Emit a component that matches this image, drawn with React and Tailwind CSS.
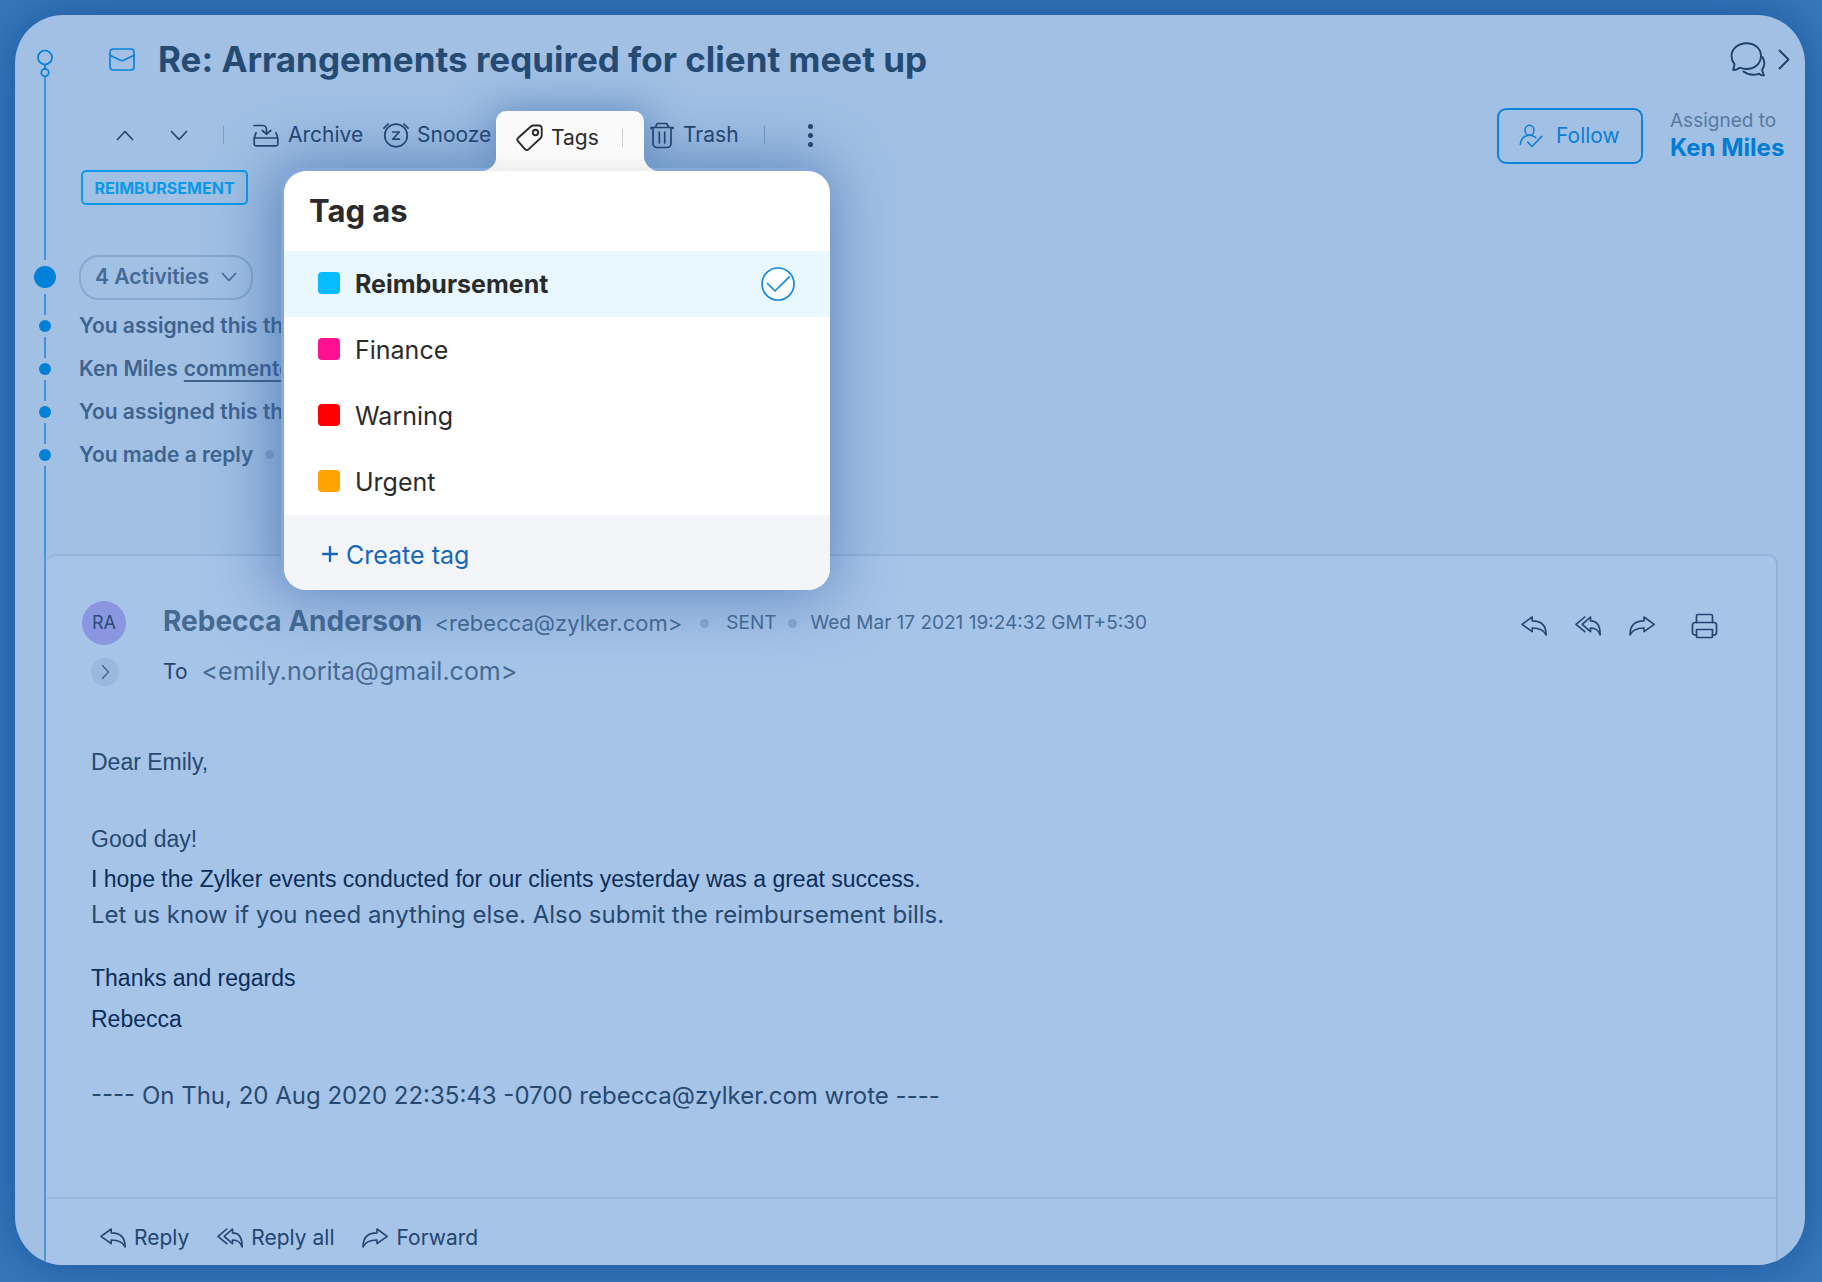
const tags = [
  { name: "Reimbursement", color: "bg-[#06bcff]", active: true },
  { name: "Finance", color: "bg-[#ff0f92]" },
  { name: "Warning", color: "bg-[#ff0000]" },
  { name: "Urgent", color: "bg-[#ffa300]" },
]

const activities = [
  { text: "You assigned this thread" },
  { text: "Ken Miles", link: "commented" },
  { text: "You assigned this thread" },
  { text: "You made a reply", dot: true },
]

function Icon({ w, h, sw = 1.7, className = "", children }) {
  return (
    <svg
      width={w}
      height={h}
      viewBox={`0 0 ${w} ${h}`}
      fill="none"
      stroke="currentColor"
      strokeWidth={sw}
      strokeLinecap="round"
      strokeLinejoin="round"
      aria-hidden="true"
      className={`shrink-0 ${className}`}
    >
      {children}
    </svg>
  )
}

const ReplyIcon = () => (
  <Icon w={26} h={20} sw={1.6}>
    <path d="M1 8.3 11.2 1v3.9C20 4.9 25.2 9 25.2 19 23 13.5 18.5 12 11.2 12v3.7Z" />
  </Icon>
)

const ReplyAllIcon = () => (
  <Icon w={26} h={20} sw={1.6}>
    <path d="M9.8 1 1 8.3l8.8 7.4" />
    <path d="M7.2 8.3 15.5 1v3.9C21.5 4.9 25.2 9 25.2 19 23.5 13.5 20.5 12 15.5 12v3.7Z" />
  </Icon>
)

const ForwardIcon = () => (
  <Icon w={26} h={20} sw={1.6}>
    <path d="M25.2 8.3 15 1v3.9C6.2 4.9 1 9 1 19 3.2 13.5 7.7 12 15 12v3.7Z" />
  </Icon>
)

const PrintIcon = () => (
  <Icon w={27} h={26}>
    <path d="M5.5 9.5V3A1.5 1.5 0 0 1 7 1.5h13A1.5 1.5 0 0 1 21.5 3v6.5" />
    <path d="M5.5 22H4a2.5 2.5 0 0 1-2.5-2.5V12A2.5 2.5 0 0 1 4 9.5h19a2.5 2.5 0 0 1 2.500 2.500v7.500A2.500 2.500 0 0 1 23 22h-1.500" />
    <path d="M5.500 16.500h16v7a1 1 0 0 1-1 1h-14a1 1 0 0 1-1-1Z" />
  </Icon>
)

const ArchiveIcon = () => (
  <Icon w={26} h={23}>
    <path d="M1 1.500h8.500a4 4 0 0 1 4 4V10" />
    <path d="m9.300 6.500 4.200 3.700L17.800 6.500" />
    <path d="M3 8.800 1.200 14v6a1.800 1.800 0 0 0 1.800 1.800h20a1.800 1.800 0 0 0 1.800-1.800v-6L23 8.800M1.200 14h23.600" />
  </Icon>
)

const SnoozeIcon = () => (
  <Icon w={26} h={26}>
    <circle cx="13" cy="13.500" r="11.300" />
    <path d="M1 6.200 5.200 2M20.800 2 25 6.200" />
    <path d="M9.700 10h6.600l-6.600 7.200h6.600" />
  </Icon>
)

const TagIcon = () => (
  <Icon w={27} h={27} sw={1.900}>
    <path d="M23 1.500h-5.500a4 4 0 0 0-2.700 1L2.300 13.700a2.500 2.500 0 0 0-.3 3.500l6.900 8a2.500 2.500 0 0 0 3.600.2L24.700 14a3.500 3.500 0 0 0 1-2.500V4A2.600 2.600 0 0 0 23 1.500Z" />
    <circle cx="19.500" cy="8.500" r="2.700" />
  </Icon>
)

const TrashIcon = () => (
  <Icon w={24} h={27}>
    <path d="M1 6.500V5.500h22v1M5.200 5.300 7.300 1.500h9.400l2.100 3.800" />
    <path d="M3 5.500v16a4 4 0 0 0 4 4h10a4 4 0 0 0 4-4v-16" />
    <path d="M9.300 10v11M14.700 10v11" />
  </Icon>
)

const ChatIcon = () => (
  <Icon w={36} h={35} sw={1.900}>
    <path d="M16.500 1.200C8 1.200 1.500 7 1.500 14c0 3.300 1.200 6 3 8.200L3.200 28c3 .2 5-.8 6.500-2.300 2 .8 4.300 1.300 6.800 1.300C25 27 31 21.200 31 14S25 1.200 16.500 1.200Z" />
    <path d="M32.500 15c2.300 4 2.500 9-.5 13l1.800 5.300c-2 .2-3.700-.3-5-1.500-5.500 1.700-11 .9-15.300-2.300" />
  </Icon>
)

const FollowIcon = () => (
  <Icon w={24} h={24} sw={1.500}>
    <ellipse cx="10.500" cy="6.200" rx="4.500" ry="5" />
    <path d="M1.200 20.500c.3-6 4.500-9.200 9.300-9.200 2.500 0 4.500.8 6.300 2.200" />
    <path d="m8.700 18 4.300 4.500 9.800-10.200" />
  </Icon>
)

const ChevronDown = ({ w = 18, h = 11, sw }) => (
  <Icon w={w} h={h} sw={sw}>
    <path d={`M1.500 1.500 ${w / 2} ${h - 1.5} ${w - 1.5} 1.500`} />
  </Icon>
)

function Divider({ className = "" }) {
  return <span className={`h-[18px] w-px shrink-0 ${className}`} />
}

function TagMenu() {
  return (
    <div className="absolute top-[60px] -left-[212px] z-10 w-[546px]">
      <div className="absolute -top-[3px] -left-[3px] right-[8px] bottom-[8px] rounded-md bg-[#86a8d8] shadow-[0_4px_64px_8px_rgba(42,92,158,0.6)]" />
      <div className="relative overflow-hidden rounded-[22px] bg-white text-[25px] text-[#2b2b2b]">
        <h2 className="flex h-20 items-center px-[25px] text-[31px] font-bold">Tag as</h2>
        <ul>
          {tags.map((tag) => (
            <li key={tag.name}>
              <button
                type="button"
                className={`flex h-[66px] w-full items-center gap-[15px] pr-[35px] pl-[34px] text-left ${tag.active ? "bg-[#e9f7ff] font-bold" : ""}`}
              >
                <span className={`mb-[2px] size-[22px] rounded-[4px] ${tag.color}`} />
                <span className="flex-1 pt-[2px]">{tag.name}</span>
                {tag.active && (
                  <Icon w={34} h={34} className="text-[#0f8ae0]">
                    <circle cx="17" cy="17" r="16" fill="white" />
                    <path d="m6.500 16.500 7.500 7.500L28.300 9.800" />
                  </Icon>
                )}
              </button>
            </li>
          ))}
        </ul>
        <button
          type="button"
          className="flex h-[75px] w-full items-center gap-2 bg-[#f3f5f8] pt-[6px] pl-[38px] text-[#1767b8]"
        >
          <Icon w={16} h={16} sw={2.400} className="mb-1">
            <path d="M8 1v14M1 8h14" />
          </Icon>
          Create tag
        </button>
      </div>
    </div>
  )
}

function Toolbar() {
  return (
    <div className="mt-[3px] flex h-[59px] items-start text-[21px] text-[#23456f]">
      <div className="flex h-12 items-center">
        <button type="button" aria-label="Previous" className="ml-[37px] rotate-180">
          <ChevronDown />
        </button>
        <button type="button" aria-label="Next" className="ml-9">
          <ChevronDown />
        </button>
        <Divider className="ml-[35px] bg-[#7d9fc8]" />
        <button type="button" className="ml-[29px] flex w-[130px] items-center gap-[9px]">
          <ArchiveIcon />
          Archive
        </button>
        <button type="button" className="flex w-[113px] items-center gap-2">
          <SnoozeIcon />
          Snooze
        </button>
      </div>

      {/* Open tab with the tag menu */}
      <div className="relative z-10">
        <div className="absolute inset-x-0 top-1 h-10 rounded-[10px] shadow-[0_0_44px_6px_rgba(42,92,158,0.5)]" />
        <svg
          width="172"
          height="60"
          viewBox="0 0 172 60"
          aria-hidden="true"
          className="absolute top-0 -left-3 z-20"
        >
          <defs>
            <linearGradient id="tab" x1="0" y1="0" x2="0" y2="1">
              <stop offset="0.75" stopColor="#fafafa" />
              <stop offset="1" stopColor="#efefef" />
            </linearGradient>
          </defs>
          <path d="M0 60c7-2 12-7 12-13V10A10 10 0 0 1 22 0h128a10 10 0 0 1 10 10v37c1 5 5 11 12 13Z" fill="url(#tab)" />
        </svg>
        <button type="button" aria-expanded="true" className="relative z-30 flex h-[53px] w-[148px] items-center gap-2 pl-5 text-[#2b2b2b]">
          <TagIcon />
          Tags
          <Divider className="ml-[15px] bg-[#cfcfcf]" />
        </button>
        <TagMenu />
      </div>

      <div className="relative z-20 flex h-12 items-center">
        <button type="button" className="ml-[6px] flex items-center gap-[9px]">
          <TrashIcon />
          Trash
        </button>
        <Divider className="ml-[25px] bg-[#6c90c0]" />
        <button type="button" aria-label="More actions" className="ml-[43px] flex flex-col gap-1">
          <span className="size-[5px] rounded-full bg-current" />
          <span className="size-[5px] rounded-full bg-current" />
          <span className="size-[5px] rounded-full bg-current" />
        </button>
      </div>
    </div>
  )
}

function Rail({ big }) {
  return (
    <div className="flex w-[60px] shrink-0 flex-col items-center self-stretch">
      <span className="w-[2px] flex-1 bg-[#3f93dc]" />
      <span className={`rounded-full bg-[#0080d6] ${big ? "my-[6px] size-[22px]" : "my-[5px] size-3"}`} />
      <span className="w-[2px] flex-1 bg-[#3f93dc]" />
    </div>
  )
}

function Message() {
  return (
    <article className="mr-[27px] ml-[29px] flex flex-1 border-l-2 border-[#4a97da]">
      <div className="flex flex-1 flex-col rounded-t-[10px] border-2 border-b-0 border-l-0 border-[#93b3da] bg-[#a6c3e8]">
        <header className="flex items-start pt-[45px] pr-[58px] pl-9">
          <div className="flex w-[81px] flex-col gap-[13px]">
            <span className="flex size-11 items-center justify-center rounded-full bg-[#8a97e0] text-lg text-[#2c4a7a]">
              RA
            </span>
            <button
              type="button"
              aria-label="Show details"
              className="ml-[9px] flex size-7 items-center justify-center rounded-full bg-[#9ab8de] text-[#456a92]"
            >
              <Icon w={9} h={16} sw={1.500}>
                <path d="m1.500 1.500 6 6.500-6 6.500" />
              </Icon>
            </button>
          </div>
          <div className="flex flex-1 flex-col text-[#456a92]">
            <div className="mt-[2px] flex h-9 items-center">
              <h2 className="text-[28px] font-bold">Rebecca Anderson</h2>
              <span className="ml-3 pt-1 text-[22px]">&lt;rebecca@zylker.com&gt;</span>
              <span className="mt-1 ml-[18px] size-[9px] rounded-full bg-[#88a9d0]" />
              <span className="ml-[17px] pt-1 text-[19px]">SENT</span>
              <span className="mt-1 ml-3 size-[9px] rounded-full bg-[#88a9d0]" />
              <span className="ml-[13px] pt-1 text-[19px]">Wed Mar 17 2021 19:24:32 GMT+5:30</span>
            </div>
            <p className="mt-[15px] flex h-9 items-center gap-[14px]">
              <span className="text-[21px] text-[#23456f]">To</span>
              <span className="text-[25px]">&lt;emily.norita@gmail.com&gt;</span>
            </p>
          </div>
          <div className="mt-3 flex items-center gap-7 text-[#23456f]">
            <button type="button" aria-label="Reply"><ReplyIcon /></button>
            <button type="button" aria-label="Reply all"><ReplyAllIcon /></button>
            <button type="button" aria-label="Forward"><ForwardIcon /></button>
            <button type="button" aria-label="Print" className="ml-2"><PrintIcon /></button>
          </div>
        </header>

        <div className="flex-1 px-[45px] pt-[54px] font-['Liberation_Sans',Arial,sans-serif] text-[23px] leading-9 text-[#26496f]">
          <p>Dear Emily,</p>
          <p className="mt-[41px]">Good day!</p>
          <p className="mt-1 text-[#0a2e58]">
            I hope the Zylker events conducted for our clients yesterday was a great success.
          </p>
          <p className="font-[Inter,sans-serif] text-2xl leading-9">
            Let us know if you need anything else. Also submit the reimbursement bills.
          </p>
          <p className="mt-[27px] text-[#0a2e58]">Thanks and regards</p>
          <p className="mt-[5px] text-[#0a2e58]">Rebecca</p>
          <p className="mt-[41px] font-[Inter,sans-serif] text-2xl leading-9">
            ---- On Thu, 20 Aug 2020 22:35:43 -0700 rebecca@zylker.com wrote ----
          </p>
        </div>

        <footer className="flex h-[68px] items-center gap-7 border-t-2 border-[#9bb9df] pt-3 pl-[54px] text-[21px] text-[#23456f]">
          <button type="button" className="flex items-center gap-2"><ReplyIcon />Reply</button>
          <button type="button" className="flex items-center gap-2"><ReplyAllIcon />Reply all</button>
          <button type="button" className="flex items-center gap-2"><ForwardIcon />Forward</button>
        </footer>
      </div>
    </article>
  )
}

export default function App() {
  return (
    <div className="flex min-h-screen bg-[#3779ba] pt-[15px] pr-[17px] pb-[17px] pl-[15px] font-[Inter,sans-serif]">
      <main className="flex flex-1 flex-col overflow-hidden rounded-[48px] bg-[#a1c0e4] shadow-[0_0_50px_rgba(20,75,150,0.8)]">

        {/* SUBJECT AND TOOLBAR */}
        <section className="flex">
          <div className="flex w-[60px] shrink-0 flex-col items-center pt-[34px]">
            <Icon w={18} h={28} className="text-[#0080d6]">
              <circle cx="9" cy="8.500" r="7" />
              <circle cx="9" cy="23.500" r="3.700" />
              <path d="M9 15.500v4" />
            </Icon>
            <span className="w-[2px] flex-1 bg-[#3f93dc]" />
          </div>
          <div className="flex-1 pr-[15px] pl-1">
            <div className="flex h-[93px] items-center pb-[5px]">
              <Icon w={26} h={23} className="ml-[30px] text-[#0a83d8]">
                <rect x="1" y="1" width="24" height="21" rx="3" />
                <path d="m1.500 7.500 9.800 4.700a4 4 0 0 0 3.400 0l9.800-4.700" />
              </Icon>
              <h1 className="ml-[23px] flex-1 text-[35px] font-bold text-[#264b73]">
                Re: Arrangements required for client meet up
              </h1>
              <button type="button" aria-label="Comments" className="flex items-center gap-3 text-[#1f426b]">
                <ChatIcon />
                <Icon w={12} h={21} sw={1.900}>
                  <path d="m1.500 1.500 9 9-9 9" />
                </Icon>
              </button>
            </div>
            <div className="flex justify-between">
              <Toolbar />
              <div className="flex items-start gap-[27px]">
                <button
                  type="button"
                  className="flex h-14 w-[146px] items-center gap-[13px] rounded-[9px] border-2 border-[#0a83d8] pl-5 text-[21px] text-[#0a7fd2]"
                >
                  <FollowIcon />
                  Follow
                </button>
                <p className="w-[120px] text-[19px] leading-[26px] whitespace-nowrap text-[#58799f]">
                  Assigned to
                  <a href="#ken" className="block text-2xl leading-7 font-bold text-[#007cd2]">Ken Miles</a>
                </p>
              </div>
            </div>
            <div className="mb-[45px] ml-[2px] flex h-[35px] w-[167px] items-center justify-center rounded-[5px] border-2 border-[#0a9aea] text-base font-bold text-[#0a9aea]">
              REIMBURSEMENT
            </div>
          </div>
        </section>

        {/* ACTIVITY TIMELINE */}
        <section>
          <div className="flex h-[54px] items-center">
            <Rail big />
            <button
              type="button"
              className="ml-1 flex h-[45px] w-[174px] items-center gap-3 rounded-[20px] border-2 border-[#86a8d2] pl-[14px] text-[21px] font-semibold text-[#456a96]"
            >
              4 Activities
              <ChevronDown w={16} h={10} />
            </button>
          </div>
          <ul>
            {activities.map((item, i) => (
              <li key={i} className="flex h-[43px] items-center text-[21px] font-semibold whitespace-nowrap text-[#3f638e]">
                <Rail />
                <p className="ml-1 flex items-center">
                  {item.text}
                  {item.link && <a href="#comment" className="ml-[6px] underline underline-offset-4">{item.link}</a>}
                  {item.dot && <span className="ml-3 size-[9px] shrink-0 rounded-full bg-[#84a4cf]" />}
                </p>
              </li>
            ))}
          </ul>
          <div className="flex h-[78px] w-[60px] justify-center">
            <span className="w-[2px] bg-[#3f93dc]" />
          </div>
        </section>

        <Message />
      </main>
    </div>
  )
}
